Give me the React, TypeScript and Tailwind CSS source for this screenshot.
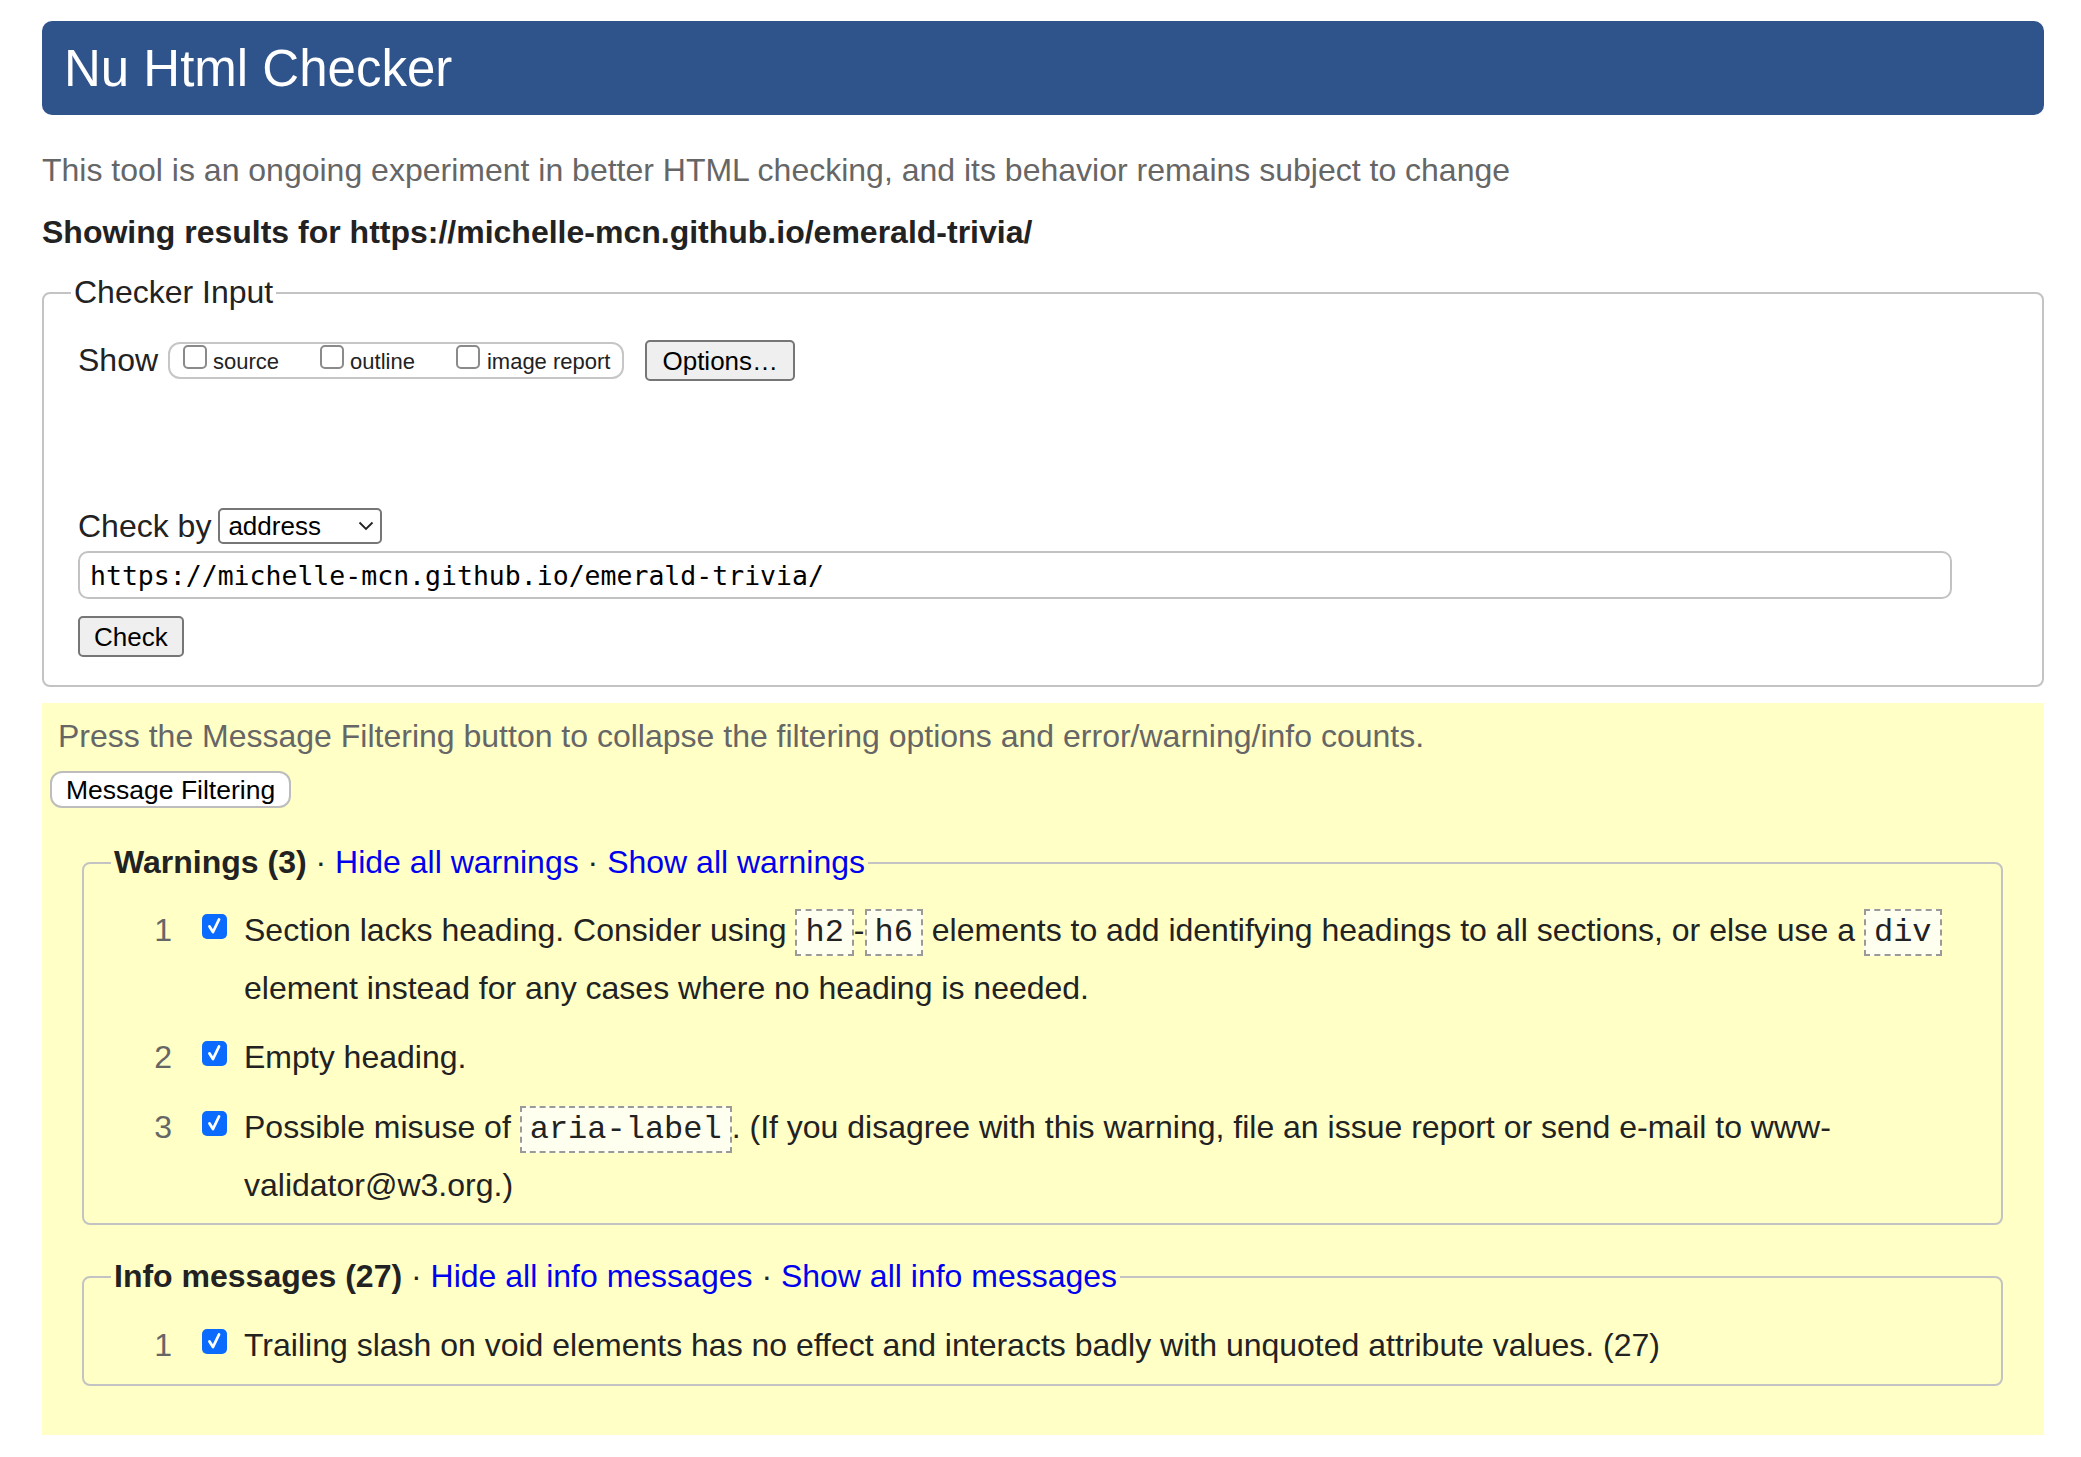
import React from "react";

function Checked() {
  return (
    <span className="mt-[13px] ml-[30px] flex h-[25px] w-[25px] shrink-0 items-center justify-center rounded-[5px] bg-[#0b6bff]">
      <svg width="25" height="25" viewBox="0 0 25 25">
        <path d="M7.5 12.5 L11 18 L17 5.5" fill="none" stroke="#ffffff" strokeWidth="2.8" strokeLinecap="round" strokeLinejoin="round" />
      </svg>
    </span>
  );
}

function Code({ children }: { children: React.ReactNode }) {
  return (
    <code className="inline-block border-2 border-dashed border-[#9a9a9a] bg-[#fffff0] px-[8px] py-[3px] font-['Liberation_Mono','Courier_New',monospace] text-[32px] leading-[37px] text-[#222]">
      {children}
    </code>
  );
}

function Item({ n, children, className = "" }: { n: number; children: React.ReactNode; className?: string }) {
  return (
    <li className={"flex " + className}>
      <span className="w-[61px] shrink-0 text-right leading-[58px] text-[#666]">{n}</span>
      <Checked />
      <p className="ml-[17px] leading-[58px]">{children}</p>
    </li>
  );
}

function Unchecked() {
  return <span className="h-[24px] w-[24px] shrink-0 rounded-[5px] border-2 border-[#8a8a8a] bg-white" />;
}

export default function App() {
  return (
    <div className="min-h-[1457px] bg-white font-['Liberation_Sans',Arial,sans-serif] text-[#222]">
      <div className="ml-[42px] w-[2002px] pt-[21px] pb-[23px]">
        <h1 className="flex h-[94px] items-center rounded-[10px] bg-[#2f538b] pl-[22px] pt-[2px] text-[51px] font-normal text-white">
          Nu Html Checker
        </h1>
        <p className="mt-[37px] text-[32px] leading-[37px] text-[#666]">
          This tool is an ongoing experiment in better HTML checking, and its behavior remains subject to change
        </p>
        <p className="mt-[25px] text-[32px] font-bold leading-[37px] text-[#222]">
          Showing results for https://michelle-mcn.github.io/emerald-trivia/
        </p>

        <fieldset className="mt-[23px] rounded-[8px] border-2 border-[#c3c3c3] px-[27px] pt-[29px] pb-[28px]">
          <legend className="px-[3px] text-[32px] leading-[37px]">Checker Input</legend>
          <div className="pl-[7px]">
            <div className="flex h-[41px] items-center">
              <span className="text-[32px] leading-[37px]">Show</span>
              <div className="ml-[10px] flex h-[37px] items-baseline rounded-[12px] border-2 border-[#c6c6c6] bg-white pt-[1px] pl-[13px] pr-[12px] text-[22px] leading-[25px]">
                <Unchecked />
                <span className="ml-[6px]">source</span>
                <span className="ml-[41px] flex items-baseline">
                  <Unchecked />
                  <span className="ml-[6px]">outline</span>
                </span>
                <span className="ml-[41px] flex items-baseline">
                  <Unchecked />
                  <span className="ml-[7px]">image report</span>
                </span>
              </div>
              <button className="ml-[21px] h-[41px] rounded-[5px] border-2 border-[#767676] bg-[#efefef] px-[15px] text-[26px] leading-[30px] text-black">
                Options…
              </button>
            </div>

            <div className="mt-[127px] flex h-[36px] items-center">
              <span className="text-[32px] leading-[37px]">Check by</span>
              <div className="ml-[7px] flex h-[36px] w-[164px] items-center justify-between rounded-[5px] border-2 border-[#767676] bg-white pl-[8px] pr-[6px] text-[26px] text-black">
                <span>address</span>
                <svg width="16" height="10" viewBox="0 0 16 10">
                  <polyline points="1.5,1.5 8,8 14.5,1.5" fill="none" stroke="#222" strokeWidth="1.8" />
                </svg>
              </div>
            </div>

            <div className="mt-[7px] flex h-[48px] w-[1874px] items-center rounded-[10px] border-2 border-[#c2c2c2] bg-white pl-[10px] pt-[2px] font-['DejaVu_Sans_Mono',Menlo,monospace] text-[26.5px] text-black">
              https://michelle-mcn.github.io/emerald-trivia/
            </div>

            <button className="mt-[17px] block h-[41px] rounded-[5px] border-2 border-[#767676] bg-[#efefef] px-[14px] text-[26px] leading-[30px] text-black">
              Check
            </button>
          </div>
        </fieldset>

        <div className="mt-[16px] bg-[#ffffc6] pt-[15px] pb-[49px]">
          <p className="ml-[16px] text-[32px] leading-[37px] text-[#666]">
            Press the Message Filtering button to collapse the filtering options and error/warning/info counts.
          </p>
          <button className="mt-[16px] ml-[8px] block h-[37px] rounded-[12px] border-2 border-[#bdbdbd] bg-white px-[14px] text-[26.5px] leading-[30px] text-black">
            Message Filtering
          </button>

          <fieldset className="mt-[36px] ml-[40px] mr-[41px] rounded-[8px] border-2 border-[#c3c3c3] pl-[27px] pr-[27px] pt-[20px] pb-[9px]">
            <legend className="px-[3px] text-[32px] leading-[37px]">
              <b>Warnings (3)</b> · <a className="text-[#0000ee]">Hide all warnings</a> ·{" "}
              <a className="text-[#0000ee]">Show all warnings</a>
            </legend>
            <ol className="text-[32px]">
              <Item n={1}>
                Section lacks heading. Consider using <Code>h2</Code>-<Code>h6</Code> elements to add identifying headings to
                all sections, or else use a <Code>div</Code> element instead for any cases where no heading is needed.
              </Item>
              <Item n={2} className="mt-[11px]">
                Empty heading.
              </Item>
              <Item n={3} className="mt-[12px]">
                Possible misuse of <Code>aria-label</Code>. (If you disagree with this warning, file an issue report or send
                e-mail to www-validator@w3.org.)
              </Item>
            </ol>
          </fieldset>

          <fieldset className="mt-[33px] ml-[40px] mr-[41px] rounded-[8px] border-2 border-[#c3c3c3] pl-[27px] pr-[27px] pt-[21px] pb-[10px]">
            <legend className="px-[3px] text-[32px] leading-[37px]">
              <b>Info messages (27)</b> · <a className="text-[#0000ee]">Hide all info messages</a> ·{" "}
              <a className="text-[#0000ee]">Show all info messages</a>
            </legend>
            <ol className="text-[32px]">
              <Item n={1}>
                Trailing slash on void elements has no effect and interacts badly with unquoted attribute values. (27)
              </Item>
            </ol>
          </fieldset>
        </div>
      </div>
    </div>
  );
}
